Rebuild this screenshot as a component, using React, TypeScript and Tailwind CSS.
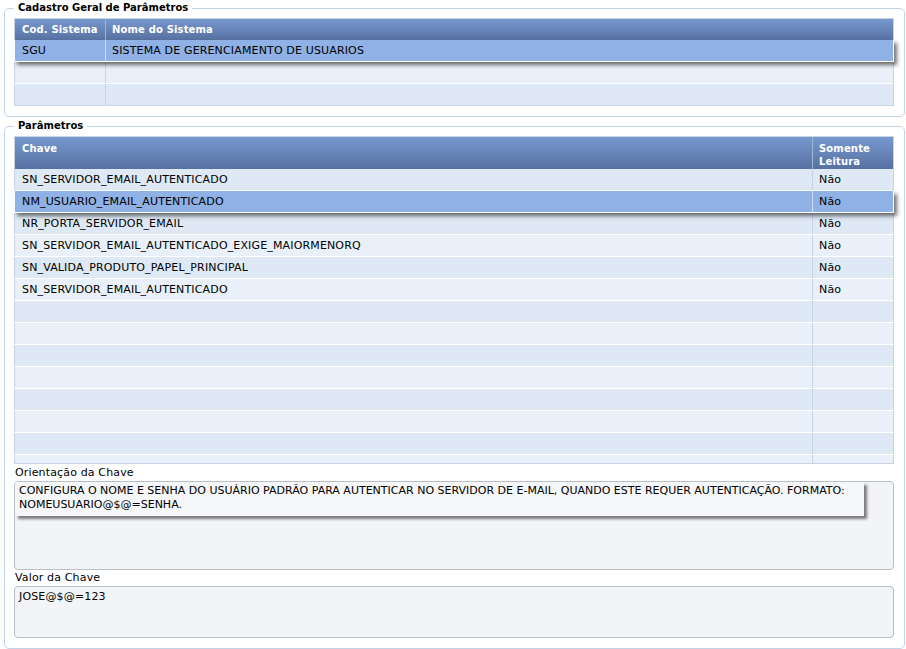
import React from 'react'

// data
const sistemas = [{ cod: 'SGU', nome: 'SISTEMA DE GERENCIAMENTO DE USUARIOS' }]

const parametros = [
  'SN_SERVIDOR_EMAIL_AUTENTICADO',
  'NM_USUARIO_EMAIL_AUTENTICADO',
  'NR_PORTA_SERVIDOR_EMAIL',
  'SN_SERVIDOR_EMAIL_AUTENTICADO_EXIGE_MAIORMENORQ',
  'SN_VALIDA_PRODUTO_PAPEL_PRINCIPAL',
  'SN_SERVIDOR_EMAIL_AUTENTICADO'
]

const font = 'font-["DejaVu_Sans",Verdana,sans-serif] text-[11px] tracking-[0.15px]'
const bold = 'font-["DejaVu_Sans",Verdana,sans-serif] text-[10px] font-bold'
const rowBg = (i: number, selected: boolean) =>
  selected
    ? 'bg-[#8fb1e6] border-white shadow-[3px_3px_4px_rgba(0,0,0,0.55)] relative z-10'
    : i % 2 === 0
      ? 'bg-[#dfe8f5] border-[#c6d4e8]'
      : 'bg-[#e9f0f9] border-[#c6d4e8]'

const Group: React.FC<{ title: string; children: React.ReactNode; className?: string }> = ({
  title,
  children,
  className
}) => (
  <fieldset
    className={`ml-[4px] w-[901px] rounded-[5px] border border-[#c3d2e6] pl-[9px] pr-[10px] pt-[2px] pb-[10px] ${className ?? ''}`}
  >
    <legend className={`${bold} h-[16px] px-[4px] leading-[16px] text-black`}>{title}</legend>
    {children}
  </fieldset>
)

const Sistemas: React.FC = () => (
  <div className={`${font} text-black`}>
    <div className={`${bold} grid h-[22px] grid-cols-[91px_1fr] border border-b-0 border-[#c6d4e8] bg-gradient-to-b from-[#7799cf] to-[#5771a1] text-white`}>
      <div className="flex items-center border-r border-[#9fb5d6] px-[7px]">Cod. Sistema</div>
      <div className="flex items-center px-[6px]">Nome do Sistema</div>
    </div>
    {[0, 1, 2].map((i) => {
      const s = sistemas[i]
      const selected = i === 0
      const last = i === 2
      return (
        <div
          key={i}
          className={`grid h-[22px] grid-cols-[91px_1fr] border-x border-b ${rowBg(i, selected)} ${last ? 'border-b-[#c6d4e8]' : 'border-b-white'}`}
        >
          <div className={`flex items-center border-r px-[7px] pt-px ${selected ? 'border-[#c9dbf5]' : 'border-[#c6d4e8]'}`}>
            {s?.cod}
          </div>
          <div className="flex items-center px-[6px] pt-px">{s?.nome}</div>
        </div>
      )
    })}
  </div>
)

const Parametros: React.FC = () => (
  <div className={`${font} text-black`}>
    <div className={`${bold} grid h-[33px] grid-cols-[1fr_80px] border border-b-0 border-[#c6d4e8] bg-gradient-to-b from-[#7799cf] to-[#5771a1] leading-[13px] text-white`}>
      <div className="border-r border-[#9fb5d6] px-[7px] pt-[5px]">Chave</div>
      <div className="px-[6px] pt-[5px]">
        Somente
        <br />
        Leitura
      </div>
    </div>
    <div className="h-[294px] overflow-x-visible overflow-y-clip">
      {Array.from({ length: 14 }).map((_, i) => {
        const p = parametros[i]
        const selected = i === 1
        return (
          <div
            key={i}
            className={`grid h-[22px] grid-cols-[1fr_80px] border-x border-b border-b-white ${rowBg(i, selected)}`}
          >
            <div className={`flex items-center border-r px-[7px] pt-px ${selected ? 'border-[#c9dbf5]' : 'border-[#c6d4e8]'}`}>
              {p}
            </div>
            <div className="flex items-center px-[6px] pt-px">{p ? 'Não' : ''}</div>
          </div>
        )
      })}
    </div>
    <div className="h-px bg-[#c6d4e8]" />
  </div>
)

const App: React.FC = () => {
  return (
    <div className="h-[649px] w-[906px] overflow-hidden bg-white">
      <Group title="Cadastro Geral de Parâmetros">
        <Sistemas />
      </Group>

      <Group title="Parâmetros" className="mt-px">
        <Parametros />

        <div className={`${font} mt-px h-[16px] pl-px leading-[16px] text-black`}>Orientação da Chave</div>
        <div className={`${font} h-[89px] rounded-[4px] border border-[#b9bec7] bg-[#f3f4f6] text-black`}>
          <div className="w-[849px] whitespace-nowrap rounded-tl-[3px] bg-[#f6f7f9] px-[4px] pt-[2px] pb-[4px] leading-[14px] tracking-normal shadow-[3px_3px_3px_rgba(0,0,0,0.5)]">
            CONFIGURA O NOME E SENHA DO USUÁRIO PADRÃO PARA AUTENTICAR NO SERVIDOR DE E-MAIL, QUANDO ESTE REQUER AUTENTICAÇÃO. FORMATO:
            <br />
            NOMEUSUARIO@$@=SENHA.
          </div>
        </div>

        <div className={`${font} h-[16px] pl-px leading-[16px] text-black`}>Valor da Chave</div>
        <div className={`${font} h-[52px] rounded-[4px] border border-[#b9bec7] bg-[#f3f4f6] px-[4px] pt-[3px] leading-[14px] text-black`}>
          JOSE@$@=123
        </div>
      </Group>
    </div>
  )
}

export default App
